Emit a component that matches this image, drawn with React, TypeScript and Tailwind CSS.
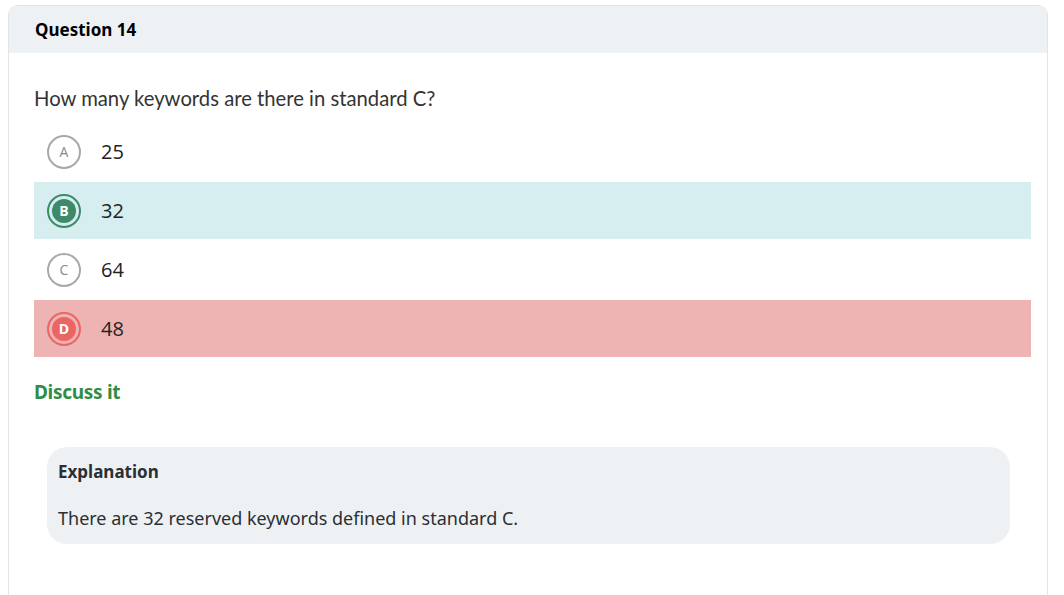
import React from "react";

type Option = {
  letter: string;
  text: string;
  state?: "correct" | "wrong";
};

const options: Option[] = [
  { letter: "A", text: "25" },
  { letter: "B", text: "32", state: "correct" },
  { letter: "C", text: "64" },
  { letter: "D", text: "48", state: "wrong" },
];

const OptionRow = ({ option }: { option: Option }) => {
  const rowBg =
    option.state === "correct"
      ? "bg-[#d6eeef]"
      : option.state === "wrong"
      ? "bg-[#eeb3b3]"
      : "bg-white";

  return (
    <div className={`flex items-center h-[57px] pl-[13px] ${rowBg}`}>
      {option.state === "correct" ? (
        <div className="w-[34px] h-[34px] rounded-full border-2 border-[#3d8a6a] flex items-center justify-center">
          <div className="w-[24px] h-[24px] rounded-full bg-[#3d8a6a] flex items-center justify-center text-white text-[14px] font-bold">
            {option.letter}
          </div>
        </div>
      ) : option.state === "wrong" ? (
        <div className="w-[34px] h-[34px] rounded-full border-2 border-[#ec6565] flex items-center justify-center">
          <div className="w-[24px] h-[24px] rounded-full bg-[#ec6565] flex items-center justify-center text-white text-[14px] font-bold">
            {option.letter}
          </div>
        </div>
      ) : (
        <div className="w-[34px] h-[34px] rounded-full border-2 border-[#a8a8a8] flex items-center justify-center text-[#8a8a8a] text-[14px]">
          {option.letter}
        </div>
      )}
      <span className="ml-[20px] text-[20px] text-[#222]">{option.text}</span>
    </div>
  );
};

export default function App() {
  return (
    <div
      className="w-[1064px] h-[595px] bg-white pt-[5px] pl-[8px] overflow-hidden"
      style={{ fontFamily: '"Open Sans", "Noto Sans", sans-serif' }}
    >
      <article className="w-[1040px] h-[620px] border border-[#e2e4e7] rounded-t-[10px] overflow-hidden">
        <div className="h-[47px] bg-[#eef1f4] flex items-center pl-[26px]">
          <span
            className="text-[17px] font-bold text-black"
            style={{ fontFamily: '"Noto Sans", sans-serif' }}
          >
            Question 14
          </span>
        </div>
        <div className="pl-[25px] pr-[16px] pt-[30px]">
          <p
            className="text-[20.25px] text-[#333] mb-[10px]"
            style={{ fontFamily: "Lato, sans-serif" }}
          >
            How many keywords are there in standard C?
          </p>
          <div className="flex flex-col gap-[2px]">
            {options.map((option) => (
              <OptionRow key={option.letter} option={option} />
            ))}
          </div>
          <div
            className="mt-[21px] text-[19px] font-bold text-[#2f8d46] tracking-[-0.3px]"
            style={{ fontFamily: '"Noto Sans", sans-serif' }}
          >
            Discuss it
          </div>
          <div
            className="mt-[40px] ml-[13px] mr-[21px] bg-[#eef1f4] rounded-[20px] px-[11px] pt-[12px] pb-[12px]"
            style={{ fontFamily: '"Noto Sans", sans-serif' }}
          >
            <div className="text-[17px] font-bold text-[#2b2f33]">Explanation</div>
            <div className="mt-[21px] text-[18px] text-[#2b2f33]">
              There are 32 reserved keywords defined in standard C.
            </div>
          </div>
        </div>
      </article>
    </div>
  );
}
